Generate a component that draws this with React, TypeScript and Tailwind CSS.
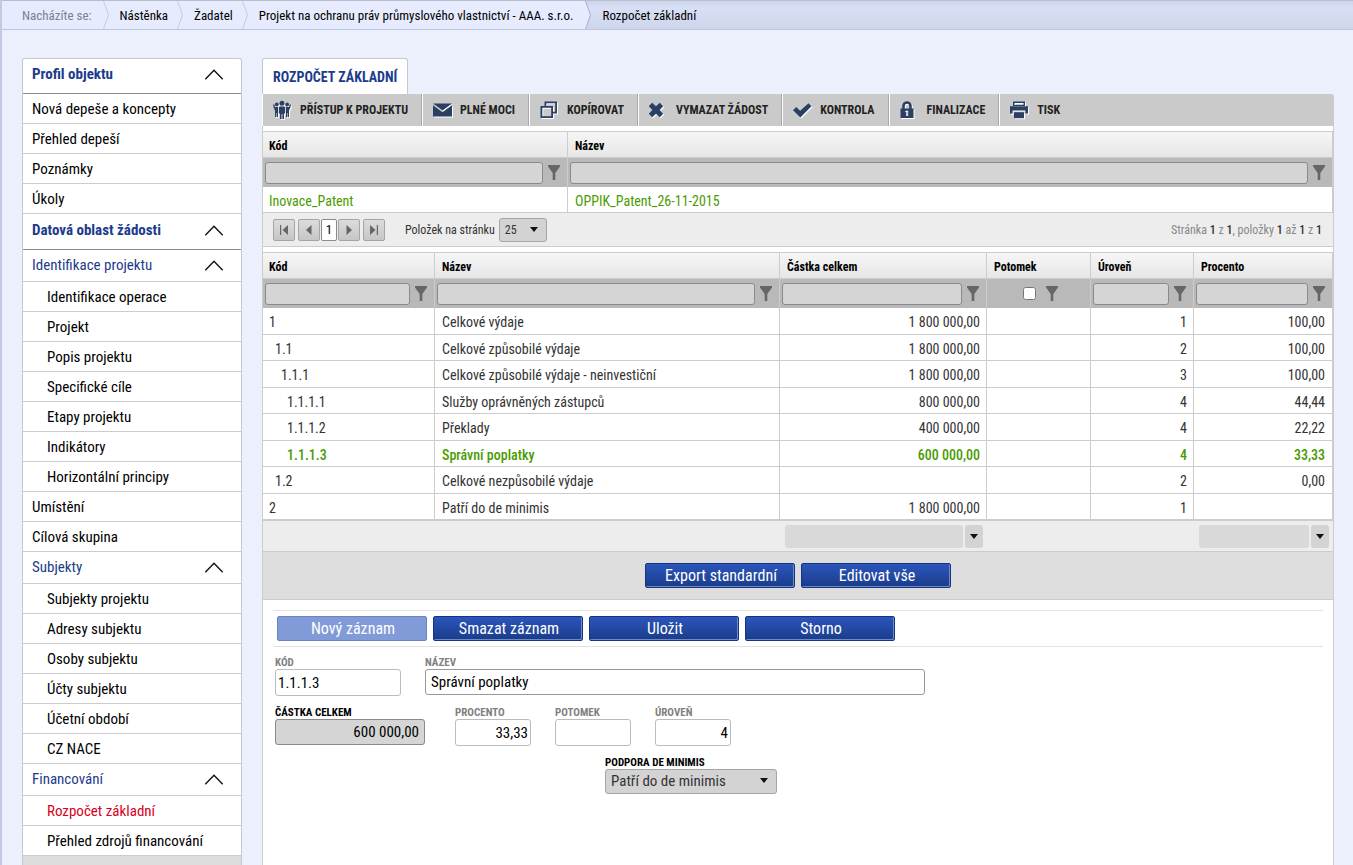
import { useState } from "react";
import type { ReactNode } from "react";

type MenuItem = {
  label: string;
  kind: "section" | "group" | "item" | "sub";
  active?: boolean;
  disabled?: boolean;
};

const MENU: MenuItem[] = [
  { label: "Profil objektu", kind: "section" },
  { label: "Nová depeše a koncepty", kind: "item" },
  { label: "Přehled depeší", kind: "item" },
  { label: "Poznámky", kind: "item" },
  { label: "Úkoly", kind: "item" },
  { label: "Datová oblast žádosti", kind: "section" },
  { label: "Identifikace projektu", kind: "group" },
  { label: "Identifikace operace", kind: "sub" },
  { label: "Projekt", kind: "sub" },
  { label: "Popis projektu", kind: "sub" },
  { label: "Specifické cíle", kind: "sub" },
  { label: "Etapy projektu", kind: "sub" },
  { label: "Indikátory", kind: "sub" },
  { label: "Horizontální principy", kind: "sub" },
  { label: "Umístění", kind: "item" },
  { label: "Cílová skupina", kind: "item" },
  { label: "Subjekty", kind: "group" },
  { label: "Subjekty projektu", kind: "sub" },
  { label: "Adresy subjektu", kind: "sub" },
  { label: "Osoby subjektu", kind: "sub" },
  { label: "Účty subjektu", kind: "sub" },
  { label: "Účetní období", kind: "sub" },
  { label: "CZ NACE", kind: "sub" },
  { label: "Financování", kind: "group" },
  { label: "Rozpočet základní", kind: "sub", active: true },
  { label: "Přehled zdrojů financování", kind: "sub" },
  { label: "Finanční plán", kind: "sub", disabled: true },
];

type BudgetRow = {
  code: string;
  name: string;
  amount: string;
  level: string;
  percent: string;
};

const ROWS: BudgetRow[] = [
  { code: "1", name: "Celkové výdaje", amount: "1 800 000,00", level: "1", percent: "100,00" },
  { code: "1.1", name: "Celkové způsobilé výdaje", amount: "1 800 000,00", level: "2", percent: "100,00" },
  { code: "1.1.1", name: "Celkové způsobilé výdaje - neinvestiční", amount: "1 800 000,00", level: "3", percent: "100,00" },
  { code: "1.1.1.1", name: "Služby oprávněných zástupců", amount: "800 000,00", level: "4", percent: "44,44" },
  { code: "1.1.1.2", name: "Překlady", amount: "400 000,00", level: "4", percent: "22,22" },
  { code: "1.1.1.3", name: "Správní poplatky", amount: "600 000,00", level: "4", percent: "33,33" },
  { code: "1.2", name: "Celkové nezpůsobilé výdaje", amount: "", level: "2", percent: "0,00" },
  { code: "2", name: "Patří do de minimis", amount: "1 800 000,00", level: "1", percent: "" },
];

const INDENT: Record<number, string> = {
  1: "pl-[6px]",
  2: "pl-[12px]",
  3: "pl-[18px]",
  4: "pl-[24px]",
};

/* Icons */

function Funnel() {
  return (
    <svg width="12" height="15" viewBox="0 0 12 15" className="shrink-0 text-[#666]" fill="currentColor" aria-hidden="true">
      <path d="M0 0h12v1.500L7.300 8v7H4.700V8L0 1.500z" />
    </svg>
  );
}

function CaretDown({ className = "" }: { className?: string }) {
  return (
    <svg width="8" height="5" viewBox="0 0 8 5" className={className} fill="#111" aria-hidden="true">
      <path d="M0 0h8L4 5z" />
    </svg>
  );
}

function ChevronUp() {
  return (
    <svg width="20" height="11" viewBox="0 0 20 11" fill="none" stroke="#111" strokeWidth="1.4" aria-hidden="true">
      <path d="M1.300 10.200 10 1.300l8.700 8.900" />
    </svg>
  );
}

function ToolIcon({ children, width = 20 }: { children: ReactNode; width?: number }) {
  return (
    <svg
      width={width}
      height="20"
      viewBox={`0 0 ${width} 20`}
      fill="#2b3f63"
      className="drop-shadow-[1px_1px_0_#fff]"
      aria-hidden="true"
    >
      {children}
    </svg>
  );
}

const peopleIcon = (
  <ToolIcon width={18}>
    <circle cx="9" cy="3.300" r="2.500" />
    <circle cx="3.800" cy="4.500" r="1.900" />
    <circle cx="14.200" cy="4.500" r="1.900" />
    <path d="M6.800 6.600h4.400l1 1v6h-1.200V19H9.400v-5h-.8v5H7v-5.400H5.800v-6z" />
    <path d="M0 4.500h1.300L2 7h3v10H3.800v-4h-.5v4H2v-6.500L.8 8zM18 4.500h-1.300L16 7h-3v10h1.200v-4h.5v4H16v-6.500L17.200 8z" />
  </ToolIcon>
);

const mailIcon = (
  <ToolIcon>
    <path d="M0 3.500h19L9.500 10.500zM0 5.200l9.500 7 9.500-7V16.500H0z" />
  </ToolIcon>
);

const copyIcon = (
  <ToolIcon>
    <path
      fillRule="evenodd"
      d="M4.500 1.500h12.500v12h-4v4.500H0.500v-12h4zm1.800 1.800V6H13v5.700h2.200V3.300zm-4 4.500v8.400h8.900V7.800z"
    />
  </ToolIcon>
);

const crossIcon = (
  <ToolIcon>
    <path d="M3.200 2.800 7 6.200l3.800-3.400 3.400 3.400L10.700 10l3.500 3.800-3.400 3.400L7 13.800l-3.800 3.400-3.400-3.400L3.300 10-.2 6.200z" />
  </ToolIcon>
);

const checkIcon = (
  <ToolIcon>
    <path d="M0 10.200 3.200 7l4 3.700 8.300-7.500 3 3L7.300 17.500z" />
  </ToolIcon>
);

const lockIcon = (
  <ToolIcon width={14}>
    <path
      fillRule="evenodd"
      d="M2.200 8.500V6a4.800 4.800 0 0 1 9.600 0v2.500h1.700V18H.5V8.500zM4.800 8.500h4.400V6a2.200 2.200 0 0 0-4.400 0zm.6 2.200v1.500h.9V16h1.900v-5.300z"
    />
  </ToolIcon>
);

const printIcon = (
  <ToolIcon>
    <path fillRule="evenodd" d="M3 1.500h12V6H3zm1.500 1.500v2h9V3z" />
    <path d="M0 6.200h18v7.300h-2.600v-3H2.600v3H0z" />
    <path d="M4 12.200h10V18.200H4z" />
  </ToolIcon>
);

const TOOLS = [
  { label: "Přístup k projektu", icon: peopleIcon },
  { label: "Plné moci", icon: mailIcon },
  { label: "Kopírovat", icon: copyIcon },
  { label: "Vymazat žádost", icon: crossIcon },
  { label: "Kontrola", icon: checkIcon },
  { label: "Finalizace", icon: lockIcon },
  { label: "Tisk", icon: printIcon },
];

/* Layout parts */

function CrumbArrow({ current = false }: { current?: boolean }) {
  return (
    <svg width="6" height="28" viewBox="0 0 6 28" className="shrink-0" fill="none" aria-hidden="true">
      {current && <path d="M0 0l5 14-5 14z" fill="#e6ebfe" />}
      <path d="M.5 0l5 14-5 14" stroke={current ? "#a9b3cf" : "#c6cce0"} />
    </svg>
  );
}

function Breadcrumb() {
  return (
    <nav
      aria-label="Drobečková navigace"
      className="flex h-[30px] border-t border-b border-t-[#b9bdcb] border-b-[#bcc6e0] bg-[#e6ebfe] text-[13px] leading-[30px] whitespace-nowrap"
    >
      <span className="pr-[11px] pl-5 text-[#7b8194]">Nacházíte se:</span>
      <CrumbArrow />
      <a href="#nastenka" className="pr-[9px] pl-[11px]">Nástěnka</a>
      <CrumbArrow />
      <a href="#zadatel" className="pr-[9px] pl-[11px]">Žadatel</a>
      <CrumbArrow />
      <a href="#projekt" className="pr-3 pl-[11px]">
        Projekt na ochranu práv průmyslového vlastnictví - AAA. s.r.o.
      </a>
      <div className="flex flex-1 bg-linear-to-b from-[#cdd5ea] via-[#d8e0f5] via-25% to-[#cdd5ea]">
        <CrumbArrow current />
        <span aria-current="page" className="pl-[11px]">Rozpočet základní</span>
      </div>
    </nav>
  );
}

function Sidebar() {
  return (
    <nav
      aria-label="Menu"
      className="w-[220px] shrink-0 rounded-t-[3px] border border-b-0 border-[#c6c9d2] bg-white text-[15px]"
    >
      {MENU.map((item) => {
        if (item.kind === "section") {
          return (
            <button
              key={item.label}
              className="flex h-9 w-full items-center justify-between border-b border-[#8c8c8c] pr-[17px] pb-0.5 pl-[9px] font-bold text-[#1c3c8c] first:h-[35px] first:pb-1"
            >
              {item.label}
              <ChevronUp />
            </button>
          );
        }
        if (item.kind === "group") {
          return (
            <button
              key={item.label}
              className="flex h-8 w-full items-center justify-between border-b border-[#ccc] pr-[17px] pl-[9px] text-[#1c3c8c]"
            >
              {item.label}
              <ChevronUp />
            </button>
          );
        }
        return (
          <a
            key={item.label}
            href="#menu"
            aria-current={item.active ? "page" : undefined}
            className={`flex items-center border-b border-[#ccc] pt-0.5 ${
              item.kind === "sub" ? "pl-6" : "pl-[9px]"
            } ${item.active ? "text-[#d9001b]" : ""} ${
              item.disabled ? "h-8 bg-[#dcdcdc] text-[#808080]" : "h-[30px]"
            }`}
          >
            {item.label}
          </a>
        );
      })}
    </nav>
  );
}

function Toolbar() {
  return (
    <div className="flex h-8 rounded-tr-[3px] bg-[#cacaca] whitespace-nowrap">
      {TOOLS.map((tool) => (
        <div
          key={tool.label}
          className="flex border-r border-[#aaa] last:border-r-0"
        >
          <button className="flex items-center border-l border-white pr-[13px] pl-[9px] text-[12px] font-bold text-[#222] uppercase">
            <span className="flex w-7 justify-start pl-px">{tool.icon}</span>
            {tool.label}
          </button>
        </div>
      ))}
    </div>
  );
}

const headCell =
  "h-[27px] border-t border-r border-b border-[#ccc] bg-linear-to-b from-[#f6f6f6] to-[#e6e6e6] pt-[3px] pl-[7px] text-left text-[12px] font-bold text-black first:pl-[6px]";

function FilterCell({ label }: { label: string }) {
  return (
    <td className="h-[29px] border-r border-[#ccc] bg-[#b9b9b9] p-0">
      <div className="flex items-center pr-[7px] pl-0.5">
        <input
          aria-label={label}
          className="h-[22px] min-w-0 flex-1 rounded-[3px] border border-[#8a8a8a] bg-[#d5d5d5] px-1"
        />
        <button aria-label={`${label} - filtrovat`} className="ml-[5px]">
          <Funnel />
        </button>
      </div>
    </td>
  );
}

function RequestTable() {
  return (
    <table className="w-full table-fixed border-separate border-spacing-0 text-[14px]">
      <colgroup>
        <col className="w-[305px]" />
        <col />
      </colgroup>
      <thead>
        <tr>
          <th className={headCell}>Kód</th>
          <th className={headCell}>Název</th>
        </tr>
        <tr>
          <FilterCell label="Filtr kód" />
          <FilterCell label="Filtr název" />
        </tr>
      </thead>
      <tbody>
        <tr className="text-[#4a9b00]">
          <td className="h-[26px] border-r border-b border-[#ccc] p-0 pt-[3px] pl-[6px]">Inovace_Patent</td>
          <td className="h-[26px] border-r border-b border-[#ccc] p-0 pt-[3px] pl-[7px]">OPPIK_Patent_26-11-2015</td>
        </tr>
      </tbody>
    </table>
  );
}

function PagerButton({ label, children }: { label: string; children: ReactNode }) {
  return (
    <button
      aria-label={label}
      className="flex h-[22px] w-[22px] items-center justify-center rounded-[2px] border border-[#a5a5a5] bg-linear-to-b from-[#dcdcdc] to-[#c6c6c6]"
    >
      <svg width="10" height="10" viewBox="0 0 10 10" fill="#666" aria-hidden="true">
        {children}
      </svg>
    </button>
  );
}

function Pager() {
  return (
    <div className="flex h-[34px] items-center border-b border-[#ccc] bg-[#ededed] pr-[11px] pl-[10px] text-[12px] text-[#333]">
      <PagerButton label="První stránka">
        <path d="M1 0h1.200v10H1zM9 0v10L3.500 5z" />
      </PagerButton>
      <div className="mx-[3px] flex gap-px">
        <PagerButton label="Předchozí stránka">
          <path d="M7.500 0v10L2 5z" />
        </PagerButton>
        <button className="h-[22px] w-4 rounded-[2px] border border-[#8a8a8a] bg-white text-[13px] text-black">
          1
        </button>
        <PagerButton label="Další stránka">
          <path d="M2.500 0v10L8 5z" />
        </PagerButton>
      </div>
      <PagerButton label="Poslední stránka">
        <path d="M7.800 0H9v10H7.800zM1 0v10l5.500-5z" />
      </PagerButton>
      <label htmlFor="pageSize" className="ml-5">Položek na stránku</label>
      <div className="relative ml-1">
        <select
          id="pageSize"
          defaultValue="25"
          className="block h-6 w-12 appearance-none rounded-[3px] border border-[#a5a5a5] bg-[#d3d3d3] pl-[5px] text-[12px]"
        >
          <option>25</option>
          <option>50</option>
        </select>
        <CaretDown className="pointer-events-none absolute top-[9px] right-[9px]" />
      </div>
      <p className="ml-auto text-[#888]">
        Stránka <b className="font-medium text-[#333]">1</b> z <b className="font-medium text-[#333]">1</b>, položky{" "}
        <b className="font-medium text-[#333]">1</b> až <b className="font-medium text-[#333]">1</b> z{" "}
        <b className="font-medium text-[#333]">1</b>
      </p>
    </div>
  );
}

function SummaryBox() {
  return (
    <div className="flex gap-0.5 pr-1 pl-[5px]">
      <div className="h-[23px] flex-1 rounded-[3px] bg-[#d9d9d9]" />
      <button
        aria-label="Souhrn"
        className="flex h-[23px] w-[18px] items-center justify-center rounded-[3px] bg-[#d3d3d3]"
      >
        <CaretDown />
      </button>
    </div>
  );
}

function BudgetTable({ selected, onSelect }: { selected: string; onSelect: (code: string) => void }) {
  const cell = "border-r border-b border-[#ccc] p-0 pt-[3px]";
  return (
    <table className="w-full table-fixed border-separate border-spacing-0 text-[14px]">
      <colgroup>
        <col className="w-[172px]" />
        <col />
        <col className="w-[207px]" />
        <col className="w-[104px]" />
        <col className="w-[103px]" />
        <col className="w-[139px]" />
      </colgroup>
      <thead>
        <tr>
          <th className={headCell}>Kód</th>
          <th className={headCell}>Název</th>
          <th className={headCell}>Částka celkem</th>
          <th className={headCell}>Potomek</th>
          <th className={headCell}>Úroveň</th>
          <th className={headCell}>Procento</th>
        </tr>
        <tr>
          <FilterCell label="Filtr kód rozpočtu" />
          <FilterCell label="Filtr název rozpočtu" />
          <FilterCell label="Filtr částka celkem" />
          <td className="h-[29px] border-r border-[#ccc] bg-[#b9b9b9] p-0">
            <div className="flex items-center justify-center gap-[10px] pl-1">
              <input type="checkbox" aria-label="Filtr potomek" className="h-[13px] w-[13px]" />
              <button aria-label="Filtr potomek - filtrovat">
                <Funnel />
              </button>
            </div>
          </td>
          <FilterCell label="Filtr úroveň" />
          <FilterCell label="Filtr procento" />
        </tr>
      </thead>
      <tbody>
        {ROWS.map((row) => (
          <tr
            key={row.code}
            onClick={() => onSelect(row.code)}
            className={`h-[26px] odd:h-[27px] ${
              row.code === selected ? "font-medium text-[#4a9b00]" : "text-[#333]"
            }`}
          >
            <td className={`${cell} ${INDENT[row.code.split(".").length]}`}>{row.code}</td>
            <td className={`${cell} pl-[7px]`}>{row.name}</td>
            <td className={`${cell} pr-[6px] text-right`}>{row.amount}</td>
            <td className={cell} />
            <td className={`${cell} pr-[6px] text-right`}>{row.level}</td>
            <td className={`${cell} pr-[7px] text-right`}>{row.percent}</td>
          </tr>
        ))}
      </tbody>
      <tfoot>
        <tr className="bg-[#ededed]">
          <td colSpan={2} className="h-8 border-t border-b border-[#ccc] p-0" />
          <td className="border-t border-b border-[#ccc] p-0">
            <SummaryBox />
          </td>
          <td colSpan={2} className="border-t border-b border-[#ccc] p-0" />
          <td className="border-t border-b border-[#ccc] p-0">
            <SummaryBox />
          </td>
        </tr>
      </tfoot>
    </table>
  );
}

function ActionButton({ children, disabled = false }: { children: ReactNode; disabled?: boolean }) {
  return (
    <button
      disabled={disabled}
      className="h-[25px] w-[150px] rounded-[2px] border border-[#17347f] bg-linear-to-b from-[#2c56bd] to-[#193c8a] pt-px pl-0.5 text-[16px] leading-none text-white shadow-[inset_-1px_-1px_0_#6f8ac8] disabled:border-[#6c84bd] disabled:bg-[#819bd8] disabled:bg-none disabled:shadow-none"
    >
      {children}
    </button>
  );
}

type FieldProps = {
  id: string;
  label: string;
  value: string;
  width: string;
  look?: "plain" | "wide" | "filled";
  right?: boolean;
  strong?: boolean;
};

function Field({ id, label, value, width, look = "plain", right = false, strong = false }: FieldProps) {
  const looks = {
    plain: "h-[27px] border-[#bbb] bg-white px-0.5",
    wide: "h-[26px] border-[#999] bg-white px-[5px]",
    filled: "h-[26px] border-[#8a8a8a] bg-[#d5d5d5] px-[5px]",
  };
  return (
    <div className={width}>
      <label
        htmlFor={id}
        className={`block h-[14px] text-[11px] leading-4 font-bold uppercase ${strong ? "text-black" : "text-[#808080]"}`}
      >
        {label}
      </label>
      <input
        id={id}
        defaultValue={value}
        className={`block w-full rounded-[3px] border text-[15px] text-black ${looks[look]} ${right ? "text-right" : ""}`}
      />
    </div>
  );
}

function RecordForm() {
  return (
    <form className="px-[10px] pt-[10px]" onSubmit={(e) => e.preventDefault()}>
      <div className="flex gap-[6px] border-t border-b border-[#e2e2e2] px-1 py-[5px]">
        <ActionButton disabled>Nový záznam</ActionButton>
        <ActionButton>Smazat záznam</ActionButton>
        <ActionButton>Uložit</ActionButton>
        <ActionButton>Storno</ActionButton>
      </div>
      <div className="px-0.5 pt-2">
        <div className="flex h-[50px] gap-6">
          <Field id="kod" label="Kód" value="1.1.1.3" width="w-[126px]" />
          <Field id="nazev" label="Název" value="Správní poplatky" width="w-[500px]" look="wide" />
        </div>
        <div className="flex h-[50px] gap-6">
          <div className="mr-[6px]">
            <Field
              id="castka"
              label="Částka celkem"
              value="600 000,00"
              width="w-[150px]"
              look="filled"
              right
              strong
            />
          </div>
          <Field id="procento" label="Procento" value="33,33" width="w-[76px]" right />
          <Field id="potomek" label="Potomek" value="" width="w-[76px]" />
          <Field id="uroven" label="Úroveň" value="4" width="w-[76px]" right />
        </div>
        <div className="ml-[330px] w-[172px]">
          <label htmlFor="podpora" className="block h-[14px] text-[11px] leading-4 font-bold text-black uppercase">
            Podpora de minimis
          </label>
          <div className="relative">
            <select
              id="podpora"
              className="block h-[25px] w-full appearance-none rounded-[3px] border border-[#a5a5a5] bg-[#d3d3d3] pl-[5px] text-[15px] text-[#333]"
            >
              <option>Patří do de minimis</option>
            </select>
            <CaretDown className="pointer-events-none absolute top-[9px] right-[9px]" />
          </div>
        </div>
      </div>
    </form>
  );
}

export default function App() {
  const [selected, setSelected] = useState("1.1.1.3");

  return (
    <div className='h-screen overflow-hidden border-l-2 border-[#c2cae3] bg-[#ecf0fd] font-["Roboto_Condensed","Liberation_Sans_Narrow",Roboto,sans-serif] text-black'>
      <Breadcrumb />
      <div className="flex h-full gap-5 pt-7 pr-[19px] pl-5">
        <Sidebar />
        <main className="flex min-w-0 flex-1 flex-col">
          <h1 className="z-10 flex h-9 items-center self-start rounded-t-[3px] border border-b-0 border-[#c6c9d2] bg-white px-[10px] pt-0.5 text-[14px] font-bold text-[#1c3c8c] uppercase">
            Rozpočet základní
          </h1>
          <Toolbar />
          <div className="flex-1 border-r border-l border-[#ccc] bg-white pt-[5px]">
            <RequestTable />
            <Pager />
            <div className="pt-[5px]">
              <BudgetTable selected={selected} onSelect={setSelected} />
            </div>
            <div className="flex h-12 items-center justify-center gap-[6px] border-b border-[#ccc] bg-[#dedede]">
              <ActionButton>Export standardní</ActionButton>
              <ActionButton>Editovat vše</ActionButton>
            </div>
            <RecordForm />
          </div>
        </main>
      </div>
    </div>
  );
}
